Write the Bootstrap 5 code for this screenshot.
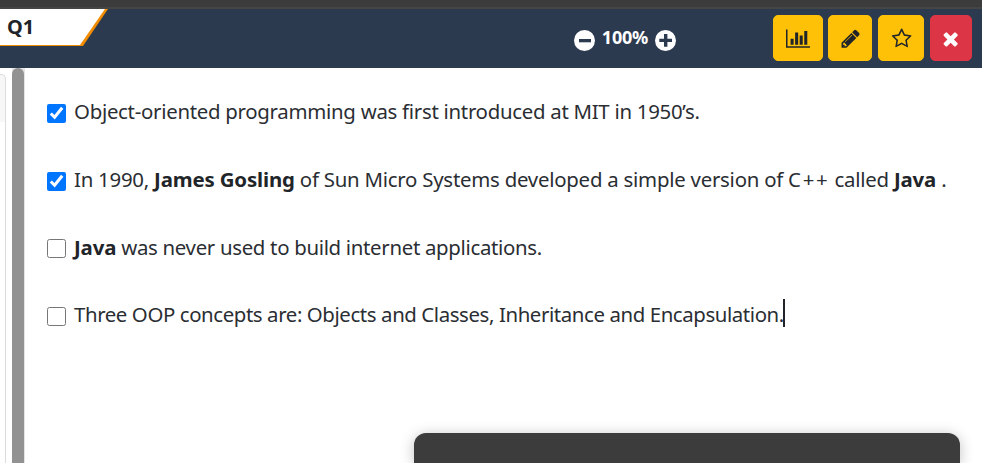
<!DOCTYPE html>
<html lang="en">
<head>
<meta charset="utf-8">
<meta name="viewport" content="width=device-width, initial-scale=1">
<title>Quiz</title>
<link href="https://cdn.jsdelivr.net/npm/bootstrap@5.3.0/dist/css/bootstrap.min.css" rel="stylesheet">
<style>
body{height:463px;font-family:"Noto Sans","Open Sans",sans-serif;color:#212529;background:#fff}
.top-strip{height:9px;background:#3c3c3c;border-bottom:2px solid #464645}
.quiz-bar{height:59px;background:#2c3a50}
.q-tab{width:108px;height:37px;background:#f28c00;clip-path:polygon(0 0,100% 0,83px 100%,0 100%)}
.q-tab-face{height:36px;background:#fff;clip-path:polygon(0 0,105px 0,80px 100%,0 100%);font-size:20px;line-height:36px;padding-left:7px}
.zoom-group{margin-left:466px;padding-top:21px}
.zoom-group svg{width:21px;height:21px}
.zoom-text{width:60px;font-size:18px;line-height:20px;letter-spacing:-.2px;margin-top:-3px}
.tools{margin-left:97px;padding-top:6px}
.tools .btn{height:46px;border-radius:5px}
.tools svg{height:21.3px;margin-top:1px;fill:#212529}
.tools .btn-danger svg{fill:#fff}
.w-stats{width:50px}.w-edit{width:44px;margin-left:5px}.w-star{width:46px;margin-left:6px}.w-close{width:42px;margin-left:6px}
.tools .w-edit svg,.tools .w-star svg{margin-left:1px}
.side-pane{width:6px;margin-top:6px;border:solid #dcdcdc;border-width:1px 1px 0 0;border-top-right-radius:5px;background:linear-gradient(#f7f7f7 47px,#fff 47px)}
.scroll-rail{width:13px;margin-left:6px;background:#e4e4e4}
.scroll-thumb{width:12px;height:100%;background:#929292;border-radius:6px 6px 0 0}
.answers{padding:10px 0 0 22px}
.answer{height:67.7px;font-size:20.4px;color:#2a2e33}
.answer b{letter-spacing:-.15px;color:#212529}
.answer .form-check-input{appearance:auto;-webkit-appearance:auto;background:none;width:19px;height:19px;margin:3px 8px 0 0;accent-color:#0075ff}
.a1{letter-spacing:-.28px;margin-top:-2px}.a2{letter-spacing:-.24px}.a3{letter-spacing:-.31px}.a4{letter-spacing:-.4px;margin-top:-2px}
.wide-plus{letter-spacing:1.7px}
.caret{width:2px;height:28px;background:#212529;margin-left:-1px;margin-top:-3px}
.dock{left:414px;top:433px;width:546px;height:30px;background:#3c3c3c;border-radius:12px 12px 0 0;box-shadow:0 2px 14px rgba(0,0,0,.25)}
</style>
<script src="https://cdn.jsdelivr.net/npm/bootstrap@5.3.0/dist/js/bootstrap.bundle.min.js"></script>
</head>
<body class="position-relative overflow-hidden d-flex flex-column">
<div class="top-strip flex-shrink-0"></div>
<header class="quiz-bar d-flex align-items-start flex-shrink-0">
  <div class="q-tab"><div class="q-tab-face fw-bold">Q1</div></div>
  <div class="zoom-group d-flex">
    <svg viewBox="0 0 21 21"><circle cx="10.500" cy="10.500" r="10.500" fill="#fff"/><path d="M5 9h12v3.300h-12z" fill="#2c3a50"/></svg>
    <span class="zoom-text text-white fw-bold text-center">100%</span>
    <svg viewBox="0 0 21 21"><circle cx="10.500" cy="10.500" r="10.500" fill="#fff"/><path d="M9 4h3.400v4.700h4.600v3.400h-4.600v4.700H9v-4.700H4.300V8.700H9z" fill="#2c3a50"/></svg>
  </div>
  <div class="tools d-flex">
    <button class="btn btn-warning w-stats p-0 d-flex align-items-center justify-content-center" aria-label="Statistics"><svg viewBox="0 0 2048 1792"><path d="M640 896v512h-256v-512h256zm384-512v1024h-256v-1024h256zm1024 1152v128h-2048v-1536h128v1408h1920zm-640-896v768h-256v-768h256zm384-384v1152h-256v-1152h256z"/></svg></button>
    <button class="btn btn-warning w-edit p-0 d-flex align-items-center justify-content-center" aria-label="Edit"><svg viewBox="0 0 1792 1792"><path d="M491 1536l91-91-235-235-91 91v107h128v128h107zm523-928q0-22-22-22-10 0-17 7l-542 542q-7 7-7 17 0 22 22 22 10 0 17-7l542-542q7-7 7-17zm-54-192l416 416-832 832h-416v-416zm683 96q0 53-37 90l-166 166-416-416 166-165q36-38 90-38 53 0 91 38l235 234q37 39 37 91z"/></svg></button>
    <button class="btn btn-warning w-star p-0 d-flex align-items-center justify-content-center" aria-label="Favourite"><svg viewBox="0 0 1792 1792"><path d="M1201 1004l306-297-422-62-189-382-189 382-422 62 306 297-73 421 378-199 377 199zm527-357q0 22-26 48l-363 354 86 500q1 7 1 20 0 50-41 50-19 0-40-12l-449-236-449 236q-22 12-40 12-21 0-31.500-14.500t-10.500-35.500q0-6 2-20l86-500-364-354q-25-27-25-48 0-37 56-46l502-73 225-455q19-41 49-41t49 41l225 455 502 73q56 9 56 46z"/></svg></button>
    <button class="btn btn-danger w-close p-0 d-flex align-items-center justify-content-center" aria-label="Close"><svg viewBox="0 0 1792 1792"><path d="M1490 1322q0 40-28 68l-136 136q-28 28-68 28t-68-28l-294-294-294 294q-28 28-68 28t-68-28l-136-136q-28-28-28-68t28-68l294-294-294-294q-28-28-28-68t28-68l136-136q28-28 68-28t68 28l294 294 294-294q28-28 68-28t68 28l136 136q28 28 28 68t-28 68l-294 294 294 294q28 28 28 68z"/></svg></button>
  </div>
</header>
<main class="d-flex flex-grow-1">
  <div class="side-pane flex-shrink-0"></div>
  <div class="scroll-rail flex-shrink-0"><div class="scroll-thumb"></div></div>
  <div class="answers text-nowrap">
    <label class="answer d-flex align-items-center"><input class="form-check-input flex-shrink-0" type="checkbox" checked><span class="a1">Object-oriented programming was first introduced at MIT in 1950’s.</span></label>
    <label class="answer d-flex align-items-center"><input class="form-check-input flex-shrink-0" type="checkbox" checked><span class="a2">In 1990, <b>James Gosling</b> of Sun Micro Systems developed a simple version of <span class="wide-plus">C++</span> called <b>Java</b> .</span></label>
    <label class="answer d-flex align-items-center"><input class="form-check-input flex-shrink-0" type="checkbox"><span class="a3"><b>Java</b> was never used to build internet applications.</span></label>
    <label class="answer d-flex align-items-center"><input class="form-check-input flex-shrink-0" type="checkbox"><span class="a4">Three OOP concepts are: Objects and Classes, Inheritance and Encapsulation.</span><i class="caret"></i></label>
  </div>
</main>
<div class="dock position-absolute"></div>
</body>
</html>
